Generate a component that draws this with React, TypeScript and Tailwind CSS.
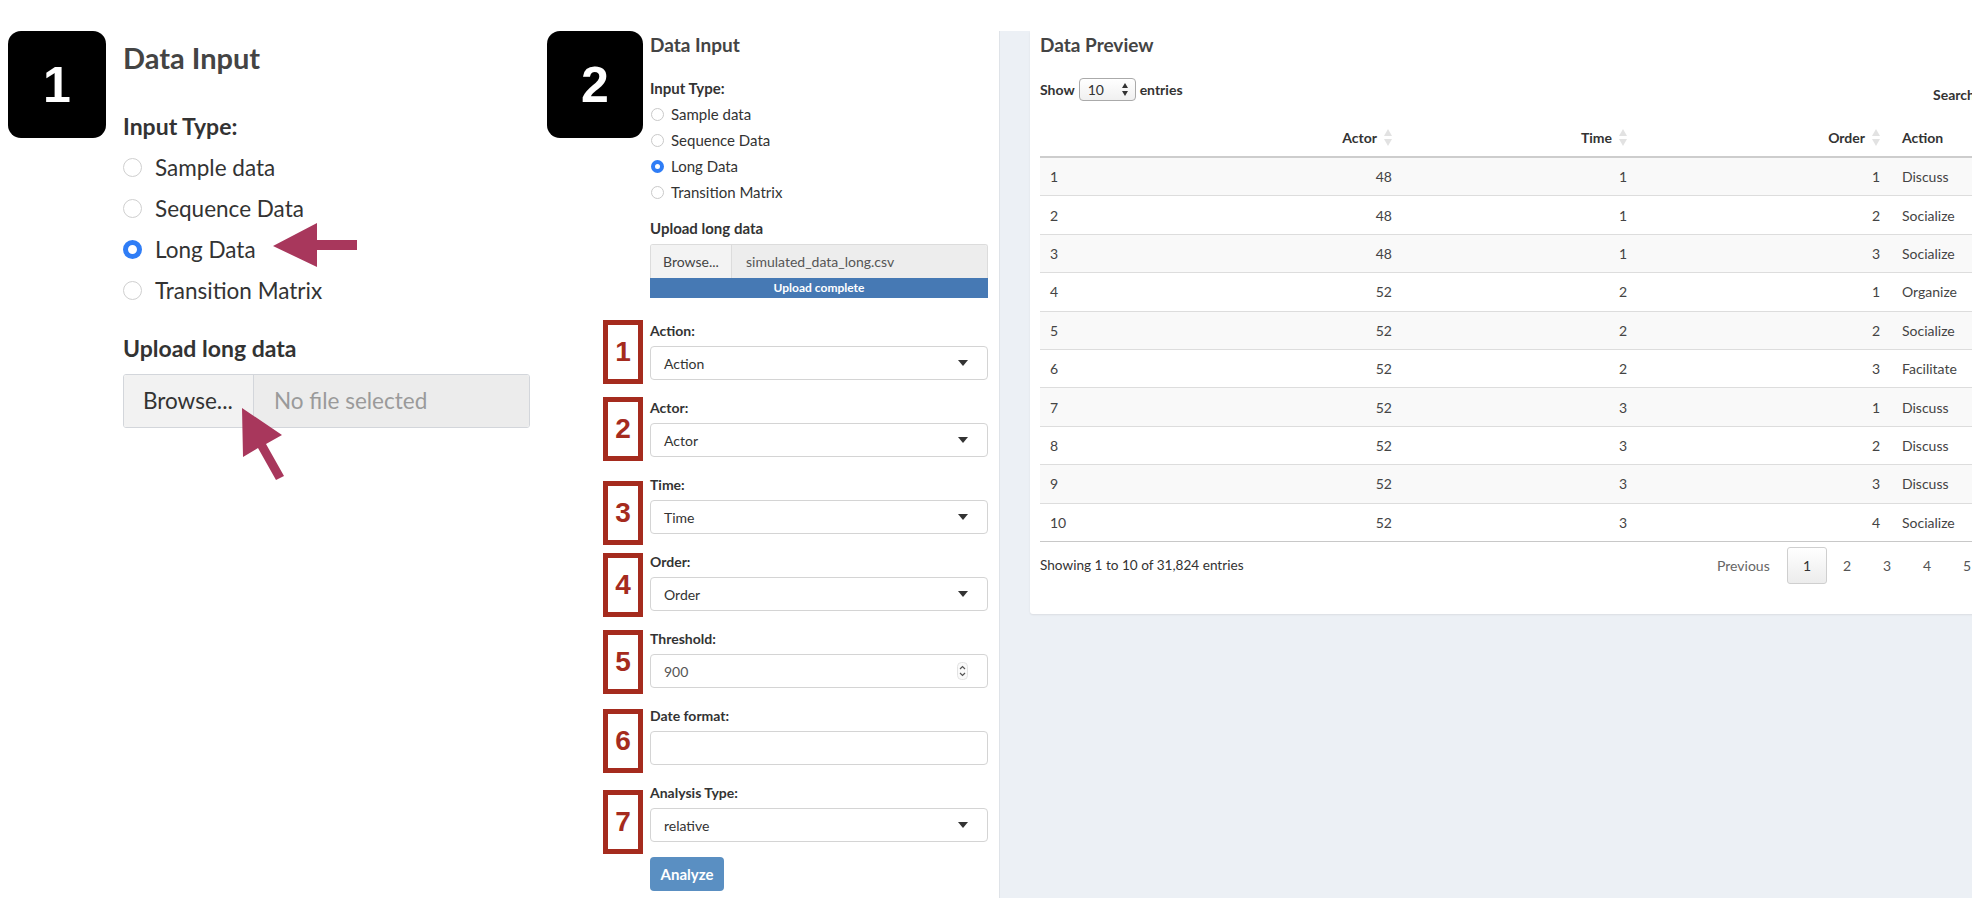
import React from "react";

const inputTypes = ["Sample data", "Sequence Data", "Long Data", "Transition Matrix"];

const rows: [number, number, number, number, string][] = [
  [1, 48, 1, 1, "Discuss"],
  [2, 48, 1, 2, "Socialize"],
  [3, 48, 1, 3, "Socialize"],
  [4, 52, 2, 1, "Organize"],
  [5, 52, 2, 2, "Socialize"],
  [6, 52, 2, 3, "Facilitate"],
  [7, 52, 3, 1, "Discuss"],
  [8, 52, 3, 2, "Discuss"],
  [9, 52, 3, 3, "Discuss"],
  [10, 52, 3, 4, "Socialize"],
];

type Field = { n: number; label: string; kind: "select" | "number" | "text"; value: string; box: string };

// box = nudge of the red number box, they are not quite even in the figure
const fields: Field[] = [
  { n: 1, label: "Action:", kind: "select", value: "Action", box: "-mt-px -ml-px" },
  { n: 2, label: "Actor:", kind: "select", value: "Actor", box: "-mt-px -ml-px" },
  { n: 3, label: "Time:", kind: "select", value: "Time", box: "mt-[6px]" },
  { n: 4, label: "Order:", kind: "select", value: "Order", box: "mt-px" },
  { n: 5, label: "Threshold:", kind: "number", value: "900", box: "mt-px" },
  { n: 6, label: "Date format:", kind: "text", value: "", box: "mt-[3px]" },
  { n: 7, label: "Analysis Type:", kind: "select", value: "relative", box: "mt-[7px]" },
];

function Badge({ n, className }: { n: string; className: string }) {
  return (
    <div
      className={`${className} h-[107px] shrink-0 rounded-[13px] bg-black flex items-center justify-center text-white font-['Liberation_Sans',Arial,sans-serif] font-bold text-[50px] leading-none`}
    >
      {n}
    </div>
  );
}

function Caret() {
  return (
    <svg width="10" height="6" viewBox="0 0 10 6" className="shrink-0">
      <path d="M0 0h10L5 6z" fill="#333" />
    </svg>
  );
}

function SortIcon() {
  return (
    <svg width="8" height="17" viewBox="0 0 8 17" className="shrink-0">
      <path d="M4 0l4 7H0z" fill="#e2e2e2" />
      <path d="M0 10h8l-4 7z" fill="#e2e2e2" />
    </svg>
  );
}

function SmallRadio({ checked, label }: { checked: boolean; label: string }) {
  return (
    <div className="h-[26px] flex items-center">
      <span
        className={`w-[13px] h-[13px] rounded-full ml-px ${
          checked ? "border-[4px] border-[#2f7df6] bg-white" : "border border-[#c9c9c9] bg-white"
        }`}
      />
      <span className="ml-[7px] text-[15px] text-[#333]">{label}</span>
    </div>
  );
}

function FieldControl({ f }: { f: Field }) {
  const base =
    "mt-[5px] h-[34px] rounded-[4px] border border-[#d4d4d4] bg-white flex items-center pl-[13px] pr-[19px]";
  if (f.kind === "select")
    return (
      <div className={base}>
        <span className="flex-1 text-[14px] text-[#333]">{f.value}</span>
        <Caret />
      </div>
    );
  if (f.kind === "number")
    return (
      <div className={base + " pr-[17px]"}>
        <span className="flex-1 text-[14px] text-[#555]">{f.value}</span>
        <svg width="11" height="18" viewBox="0 0 11 18">
          <rect x="0.5" y="0.5" width="10" height="17" rx="4" fill="#fafafa" stroke="#e3e3e3" />
          <path d="M3 7l2.5-2.5L8 7" fill="none" stroke="#555" strokeWidth="1.2" />
          <path d="M3 11l2.5 2.5L8 11" fill="none" stroke="#555" strokeWidth="1.2" />
        </svg>
      </div>
    );
  return <div className={base} />;
}

export default function App() {
  return (
    <div className="relative w-[1984px] h-[909px] bg-white overflow-hidden flex pt-[31px] font-['Lato','Noto_Sans',sans-serif]">
      {/* PANEL 1 — zoomed input */}
      <div className="w-[547px] shrink-0 flex items-start">
        <Badge n="1" className="ml-[8px] w-[98px]" />
        <div className="ml-[17px] w-[407px]">
          <h2 className="mt-[9px] text-[29px] leading-[36px] font-bold text-[#444]">Data Input</h2>
          <div className="mt-[35px] text-[23px] leading-[30px] font-bold text-[#333]">Input Type:</div>
          <div className="mt-[6px]">
            {inputTypes.map((t) => (
              <div key={t} className="h-[41px] flex items-center">
                <span
                  className={`w-[19px] h-[19px] rounded-full ${
                    t === "Long Data" ? "border-[5px] border-[#2f7df6] bg-white" : "border border-[#cfcfcf] bg-white"
                  }`}
                />
                <span className="ml-[13px] text-[22.5px] text-[#333]">{t}</span>
              </div>
            ))}
          </div>
          <div className="mt-[22px] text-[23px] leading-[30px] font-bold text-[#333]">Upload long data</div>
          <div className="mt-[11px] h-[54px] flex border border-[#d3d6db] rounded-[3px] overflow-hidden">
            <div className="w-[130px] bg-[#f2f2f2] border-r border-[#d3d6db] flex items-center pl-[19px] text-[22.5px] text-[#333]">
              Browse...
            </div>
            <div className="flex-1 bg-[#ececec] flex items-center pl-[20px] text-[22.5px] text-[#9a9a9a]">
              No file selected
            </div>
          </div>
        </div>
      </div>

      {/* PANEL 2 — app screenshot */}
      <div className="w-[1425px] h-[867px] shrink-0 flex">
        {/* sidebar */}
        <div className="w-[452px] shrink-0">
          <div className="flex items-start">
            <Badge n="2" className="w-[96px]" />
            <div className="ml-[7px] w-[338px]">
              <h2 className="mt-[2px] text-[19px] leading-[24px] font-bold text-[#444]">Data Input</h2>
              <div className="mt-[21px] text-[15px] leading-[20px] font-bold text-[#333]">Input Type:</div>
              <div className="mt-[3px]">
                {inputTypes.map((t) => (
                  <SmallRadio key={t} label={t} checked={t === "Long Data"} />
                ))}
              </div>
              <div className="mt-[13px] text-[15px] leading-[20px] font-bold text-[#333]">Upload long data</div>
              <div className="mt-[6px] h-[34px] flex border border-[#dcdcdc] border-b-0 rounded-t-[3px] overflow-hidden">
                <div className="w-[81px] bg-[#f3f3f3] border-r border-[#dcdcdc] flex items-center pl-[12px] text-[14px] text-[#444]">
                  Browse...
                </div>
                <div className="flex-1 bg-[#ededed] flex items-center pl-[14px] text-[14px] text-[#555]">
                  simulated_data_long.csv
                </div>
              </div>
              <div className="h-[20px] bg-[#4679b4] flex items-center justify-center text-[12px] font-bold text-white">
                Upload complete
              </div>
            </div>
          </div>

          {fields.map((f, i) => (
            <div key={f.n} className={`flex items-start h-[59px] ${i === 0 ? "mt-[23px]" : "mt-[18px]"}`}>
              <div className="w-[96px] shrink-0 flex justify-end">
                <div
                  className={`${f.box} w-[40px] h-[64px] border-[5px] border-[#a52b1e] bg-white flex items-center justify-center font-['Liberation_Sans',Arial,sans-serif] font-bold text-[28px] text-[#a52b1e]`}
                >
                  {f.n}
                </div>
              </div>
              <div className="ml-[7px] w-[338px]">
                <div className="h-[20px] text-[14px] leading-[20px] font-bold text-[#333]">{f.label}</div>
                <FieldControl f={f} />
              </div>
            </div>
          ))}

          <div className="mt-[15px] ml-[103px] w-[74px] h-[34px] rounded-[4px] bg-[#5a8fc2] flex items-center justify-center text-[15px] font-bold text-white">
            Analyze
          </div>
        </div>

        {/* main area */}
        <div className="flex-1 h-[867px] bg-[#ecf0f5] border-l border-[#dfe3e8] pl-[30px] overflow-hidden">
          <div className="w-[1000px] h-[583px] bg-white rounded-b-[3px] shadow-[0_1px_2px_rgba(0,0,0,0.08)] pl-[10px] pt-[2px]">
            <h2 className="text-[19px] leading-[24px] font-bold text-[#444]">Data Preview</h2>

            <div className="mt-[21px] grid grid-cols-[893px_1fr] h-[30px]">
              <div className="flex items-start h-[23px] text-[14px] font-bold text-[#333]">
                <span className="h-[23px] flex items-center">Show</span>
                <div className="ml-[4px] w-[57px] h-[23px] rounded-[4px] border border-[#aaa] bg-gradient-to-b from-white to-[#f0f0f0] flex items-center pl-[8px] pr-[7px]">
                  <span className="flex-1 font-normal text-[#333]">10</span>
                  <svg width="6" height="13" viewBox="0 0 6 13">
                    <path d="M3 0l3 5H0z" fill="#333" />
                    <path d="M0 8h6l-3 5z" fill="#333" />
                  </svg>
                </div>
                <span className="ml-[4px] h-[23px] flex items-center">entries</span>
              </div>
              <div className="self-end mb-[3px] text-[14px] leading-[20px] font-bold text-[#333]">Search:</div>
            </div>

            <div className="mt-[10px] w-[960px]">
              <div className="grid grid-cols-[120px_242px_235px_253px_110px] h-[40px] border-b-2 border-[#cdcdcd] text-[14px] font-bold text-[#333]">
                <div />
                <div className="flex items-center justify-end pr-[10px] gap-[7px]">
                  Actor <SortIcon />
                </div>
                <div className="flex items-center justify-end pr-[10px] gap-[7px]">
                  Time <SortIcon />
                </div>
                <div className="flex items-center justify-end pr-[10px] gap-[7px]">
                  Order <SortIcon />
                </div>
                <div className="flex items-center pl-[12px]">Action</div>
              </div>
              {rows.map((r, i) => (
                <div
                  key={r[0]}
                  className={`grid grid-cols-[120px_242px_235px_253px_110px] h-[38.4px] border-b text-[14px] text-[#444] ${
                    i % 2 === 0 ? "bg-[#f9f9f9]" : "bg-white"
                  } ${i === rows.length - 1 ? "border-[#c8c8c8]" : "border-[#dddddd]"}`}
                >
                  <div className="flex items-center pl-[10px]">{r[0]}</div>
                  <div className="flex items-center justify-end pr-[10px]">{r[1]}</div>
                  <div className="flex items-center justify-end pr-[10px]">{r[2]}</div>
                  <div className="flex items-center justify-end pr-[10px]">{r[3]}</div>
                  <div className="flex items-center pl-[12px]">{r[4]}</div>
                </div>
              ))}
            </div>

            <div className="mt-[5px] grid grid-cols-[677px_1fr] h-[37px] text-[14px]">
              <div className="flex items-center text-[13.6px] text-[#333]">Showing 1 to 10 of 31,824 entries</div>
              <div className="flex items-center text-[#555]">
                <span className="w-[70px] text-[#666]">Previous</span>
                <span className="w-[40px] h-[37px] flex items-center justify-center rounded-[3px] border border-[#cfcfcf] bg-gradient-to-b from-white to-[#ececec] text-[#333]">
                  1
                </span>
                {[2, 3, 4, 5].map((p) => (
                  <span key={p} className="w-[40px] text-center">
                    {p}
                  </span>
                ))}
              </div>
            </div>
          </div>
        </div>
      </div>

      {/* annotation arrows over panel 1 */}
      <svg className="absolute inset-0 pointer-events-none" width="1984" height="909" viewBox="0 0 1984 909">
        <polygon points="273,246 317,223 317,240 357,240 357,250 317,250 317,267" fill="#a8375c" />
        <polygon points="242,408 282,435 266,444 284,476 276,480 258,448 243,457" fill="#a8375c" />
      </svg>
    </div>
  );
}
